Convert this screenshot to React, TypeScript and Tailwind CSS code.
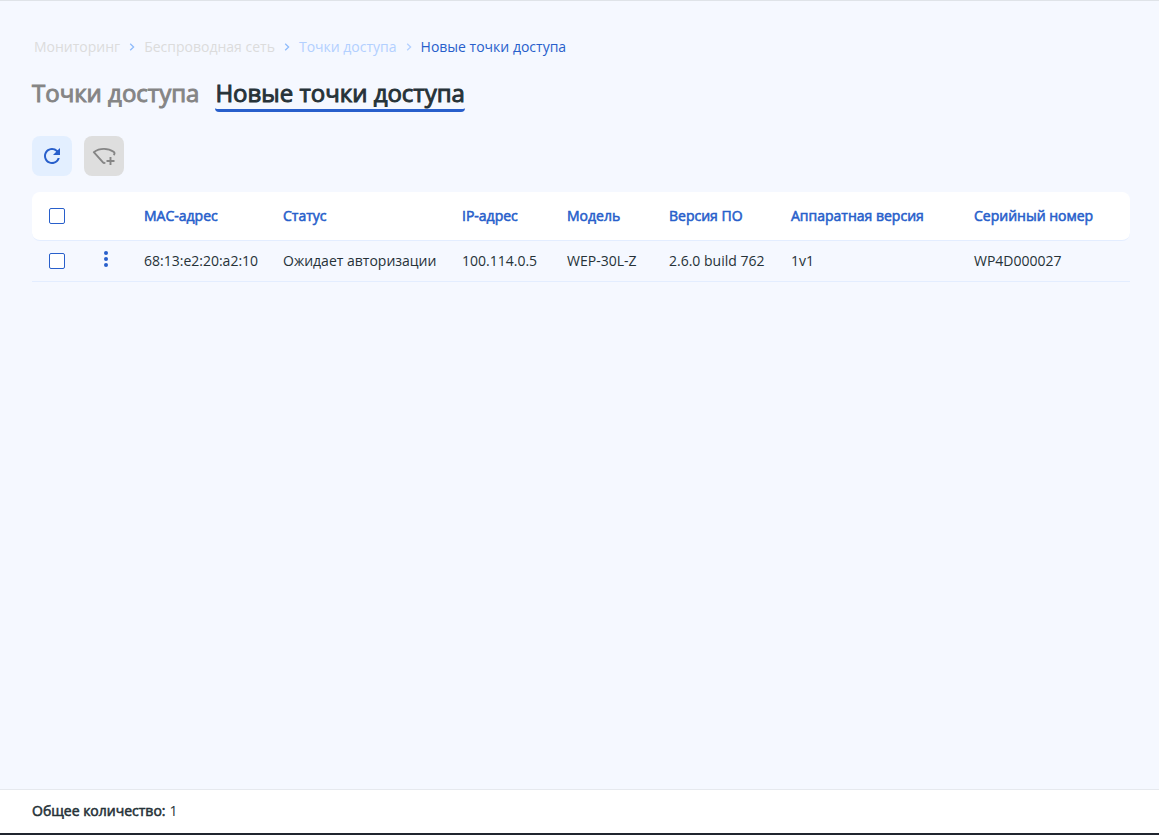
import { MdRefresh } from "react-icons/md";

const breadcrumbs = [
  { label: "Мониторинг", color: "text-[#dcdcdc]" },
  { label: "Беспроводная сеть", color: "text-[#dcdcdc]" },
  { label: "Точки доступа", color: "text-[#b3d0ff]" },
  { label: "Новые точки доступа", color: "text-[#285fcb]" },
];

const columns = [
  { key: "mac", title: "МАС-адрес", width: "w-[139px]" },
  { key: "status", title: "Статус", width: "w-[179px]" },
  { key: "ip", title: "IP-адрес", width: "w-[105px]" },
  { key: "model", title: "Модель", width: "w-[102px]" },
  { key: "firmware", title: "Версия ПО", width: "w-[122px]" },
  { key: "hardware", title: "Аппаратная версия", width: "w-[183px]" },
  { key: "serial", title: "Серийный номер", width: "" },
] as const;

type AccessPoint = Record<(typeof columns)[number]["key"], string>;

const accessPoints: AccessPoint[] = [
  {
    mac: "68:13:e2:20:a2:10",
    status: "Ожидает авторизации",
    ip: "100.114.0.5",
    model: "WEP-30L-Z",
    firmware: "2.6.0 build 762",
    hardware: "1v1",
    serial: "WP4D000027",
  },
];

function ChevronIcon({ faded }: { faded: boolean }) {
  return (
    <svg width="6" height="8" viewBox="0 0 6 8" fill="none" aria-hidden="true">
      <path d="M1.2 0.8 4.6 4 1.2 7.2" stroke={faded ? "#b3d0ff" : "#8fbcfb"} strokeWidth="1.3" />
    </svg>
  );
}

function AddAccessPointIcon() {
  return (
    <svg width="24" height="24" viewBox="0 0 24 24" fill="none" stroke="#858585" strokeWidth="1.9" aria-hidden="true">
      <path d="M21.6 11C22.9 9.8 22.8 8.7 21.6 7.8C18.8 5.8 15.6 4.9 12 4.9C8.2 4.9 4.7 6 1.8 8.2L11 18.4C11.8 19.3 12.4 19.3 13.2 18.4" strokeLinejoin="round" />
      <path d="M18.5 13V21M14.5 17H22.5" />
    </svg>
  );
}

function Checkbox({ label }: { label: string }) {
  return (
    <input
      type="checkbox"
      aria-label={label}
      className="block size-4 appearance-none rounded-xs border border-[#285fcb] bg-white checked:bg-[#285fcb]"
    />
  );
}

export default function App() {
  return (
    <div className="flex min-h-screen flex-col border-t border-b-2 border-t-[#dfe3e8] border-b-[#20252f] bg-[#f5f8ff] font-['Open_Sans',sans-serif] text-sm text-[#263238]">
      <main className="grow pt-9 pr-[29px] pl-8">
        <nav aria-label="Навигация" className="pl-0.5">
          <ol className="flex items-center">
            {breadcrumbs.map((item, index) => (
              <li key={item.label} className="flex items-center">
                {index > 0 && (
                  <span className="mx-[9px]">
                    <ChevronIcon faded={index === 3} />
                  </span>
                )}
                <a href="#" className={item.color}>
                  {item.label}
                </a>
              </li>
            ))}
          </ol>
        </nav>

        <div className="mt-5 flex gap-4 text-2xl [-webkit-text-stroke:0.04em_currentColor]">
          <a href="#" className="h-[35px] text-[#858585]">
            Точки доступа
          </a>
          <a href="#" aria-current="page" className="h-[35px] rounded-b-sm border-b-3 border-[#285fcb]">
            Новые точки доступа
          </a>
        </div>

        <div className="mt-6 flex gap-3">
          <button
            type="button"
            aria-label="Обновить"
            className="grid size-10 place-items-center rounded-lg bg-[#e3efff] text-[#285fcb]"
          >
            <MdRefresh size={24} />
          </button>
          <button
            type="button"
            disabled
            aria-label="Добавить точку доступа"
            className="grid size-10 place-items-center rounded-lg bg-[#dedede]"
          >
            <AddAccessPointIcon />
          </button>
        </div>

        <table className="mt-4 w-full table-fixed border-separate border-spacing-0 text-left whitespace-nowrap">
          <thead>
            <tr className="h-[49px] text-[#285fcb]">
              <th className="w-[50px] rounded-l-lg border-b border-[#e3edff] bg-white pl-[17px]">
                <Checkbox label="Выбрать все" />
              </th>
              <th className="w-[50px] border-b border-[#e3edff] bg-white" />
              {columns.map((column) => (
                <th
                  key={column.key}
                  className={`${column.width} border-b border-[#e3edff] bg-white px-3 font-normal [-webkit-text-stroke:0.04em_currentColor] last:rounded-r-lg`}
                >
                  {column.title}
                </th>
              ))}
            </tr>
          </thead>
          <tbody>
            {accessPoints.map((point) => (
              <tr key={point.mac} className="h-[41px]">
                <td className="border-b border-[#e3edff] pl-[17px]">
                  <Checkbox label={point.mac} />
                </td>
                <td className="border-b border-[#e3edff] pl-5">
                  <button type="button" aria-label="Действия" className="block pb-1">
                    <svg width="8" height="16" viewBox="0 0 8 16" fill="#285fcb" aria-hidden="true">
                      <circle cx="4" cy="2" r="2" />
                      <circle cx="4" cy="8" r="2" />
                      <circle cx="4" cy="14" r="2" />
                    </svg>
                  </button>
                </td>
                {columns.map((column) => (
                  <td key={column.key} className="border-b border-[#e3edff] px-3">
                    {point[column.key]}
                  </td>
                ))}
              </tr>
            ))}
          </tbody>
        </table>
      </main>

      <footer className="flex h-11 items-center gap-1 border-t border-[#e6e9ee] bg-white px-8 pb-0.5">
        <span className="[-webkit-text-stroke:0.04em_currentColor]">Общее количество:</span>
        <span>1</span>
      </footer>
    </div>
  );
}
